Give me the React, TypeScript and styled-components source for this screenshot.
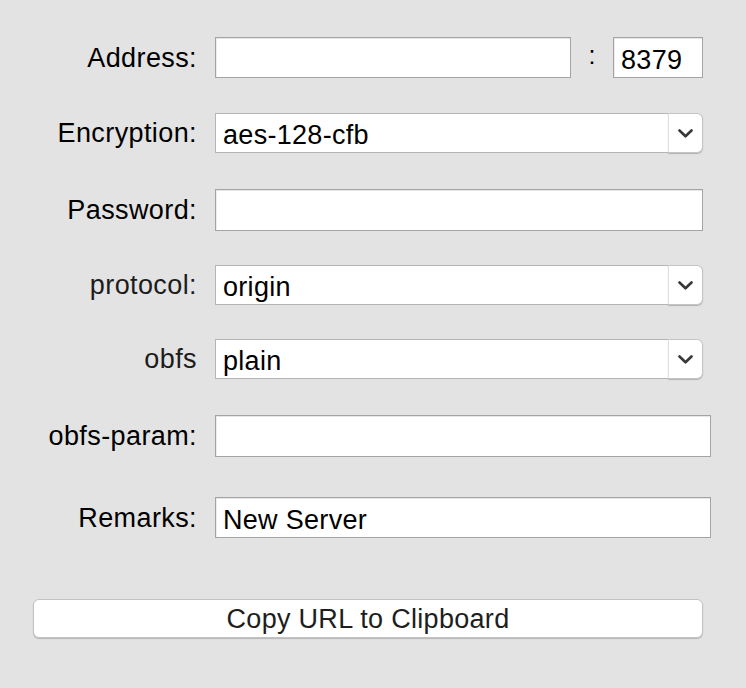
import React from "react";
import styled, { createGlobalStyle } from "styled-components";

const GlobalStyle = createGlobalStyle`
  html, body {
    margin: 0;
    padding: 0;
    background: #e3e3e3;
  }
  body {
    font-family: "Liberation Sans", Helvetica, Arial, sans-serif;
    -webkit-font-smoothing: antialiased;
  }
`;

const Window = styled.div`
  width: 746px;
  height: 688px;
  box-sizing: border-box;
  padding-top: 37px;
  background: #e3e3e3;
  display: flex;
  flex-direction: column;
`;

const Row = styled.div<{ $top?: number }>`
  display: flex;
  align-items: center;
  margin-top: ${(p) => p.$top ?? 0}px;
`;

const Label = styled.div<{ $muted?: boolean }>`
  width: 197px;
  margin-right: 18px;
  text-align: right;
  font-size: 27px;
  letter-spacing: 0.4px;
  color: ${(p) => (p.$muted ? "#1c1c1c" : "#000")};
  white-space: nowrap;
  padding-top: 1px;
`;

const Field = styled.div<{ $w: number; $h?: number }>`
  box-sizing: border-box;
  width: ${(p) => p.$w}px;
  height: ${(p) => p.$h ?? 41}px;
  background: #fff;
  border: 1px solid #a4a4a4;
  box-shadow: inset 0 1px 0 #e6e6e6, inset 1px 0 0 #ececec;
  display: flex;
  align-items: center;
  padding: 5px 0 0 7px;
  font-size: 27px;
  letter-spacing: 0.3px;
  color: #000;
  white-space: nowrap;
  overflow: hidden;
`;

const Colon = styled.div`
  width: 42px;
  text-align: center;
  font-size: 25px;
  color: #000;
  padding-bottom: 4px;
`;

const Combo = styled.div`
  display: flex;
  width: 488px;
  height: 40px;
`;

const ComboText = styled.div`
  flex: 1;
  box-sizing: border-box;
  background: #fff;
  border: 1px solid #b4b4b4;
  border-right: none;
  display: flex;
  align-items: center;
  padding: 5px 0 0 7px;
  font-size: 27px;
  letter-spacing: 0.3px;
  color: #000;
`;

const ComboButton = styled.div`
  width: 35px;
  box-sizing: border-box;
  background: #fff;
  border: 1px solid #c4c4c4;
  border-left: 1px solid #dedede;
  border-radius: 0 6px 6px 0;
  box-shadow: 0 1px 1px rgba(0, 0, 0, 0.22);
  display: flex;
  align-items: center;
  justify-content: center;
`;

const Chevron = () => (
  <svg width="15" height="9" viewBox="0 0 15 9">
    <polyline
      points="1.5,1.5 7.5,7.3 13.5,1.5"
      fill="none"
      stroke="#383838"
      strokeWidth="2.6"
      strokeLinecap="round"
      strokeLinejoin="round"
    />
  </svg>
);

const ButtonRow = styled.div`
  display: flex;
  padding-left: 33px;
  margin-top: 61px;
`;

const Button = styled.div`
  box-sizing: border-box;
  width: 670px;
  height: 39px;
  background: #fff;
  border: 1px solid #c2c2c2;
  border-radius: 6px;
  box-shadow: 0 1px 1px rgba(0, 0, 0, 0.2);
  display: flex;
  align-items: center;
  justify-content: center;
  font-size: 27px;
  letter-spacing: 0.3px;
  color: #1e1e1e;
  padding-top: 2px;
`;

const ComboBox = ({ value }: { value: string }) => (
  <Combo>
    <ComboText>{value}</ComboText>
    <ComboButton>
      <Chevron />
    </ComboButton>
  </Combo>
);

export default function App() {
  return (
    <>
      <GlobalStyle />
      <Window>
        <Row>
          <Label>Address:</Label>
          <Field $w={356} />
          <Colon>:</Colon>
          <Field $w={90}>8379</Field>
        </Row>
        <Row $top={35}>
          <Label>Encryption:</Label>
          <ComboBox value="aes-128-cfb" />
        </Row>
        <Row $top={36}>
          <Label>Password:</Label>
          <Field $w={488} $h={42} />
        </Row>
        <Row $top={34}>
          <Label $muted>protocol:</Label>
          <ComboBox value="origin" />
        </Row>
        <Row $top={34}>
          <Label $muted>obfs</Label>
          <ComboBox value="plain" />
        </Row>
        <Row $top={36}>
          <Label>obfs-param:</Label>
          <Field $w={496} $h={42} />
        </Row>
        <Row $top={40}>
          <Label>Remarks:</Label>
          <Field $w={496}>New Server</Field>
        </Row>
        <ButtonRow>
          <Button>Copy URL to Clipboard</Button>
        </ButtonRow>
      </Window>
    </>
  );
}
